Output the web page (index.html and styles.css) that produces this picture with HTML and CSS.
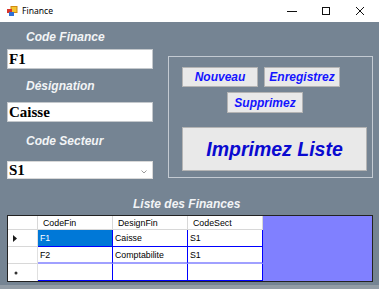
FILE: index.html
```html
<!DOCTYPE html>
<html>
<head>
<meta charset="utf-8">
<link rel="stylesheet" href="styles.css">
</head>
<body>
<div class="window">
  <div class="titlebar">
    <svg class="app-icon" width="11" height="10" viewBox="0 0 11 10">
      <rect x="4" y="0.5" width="6" height="6" fill="#f4c430" stroke="#d08a10" stroke-width="1"/>
      <rect x="0" y="3" width="5" height="4" fill="#d8362c"/>
      <rect x="2" y="6" width="5" height="4" fill="#2f6fd6"/>
    </svg>
    <span class="title">Finance</span>
    <div class="controls">
      <div class="ctl"><svg width="10" height="10" viewBox="0 0 10 10"><line x1="0" y1="5.5" x2="10" y2="5.5" stroke="#111" stroke-width="1"/></svg></div>
      <div class="ctl"><svg width="10" height="10" viewBox="0 0 10 10"><rect x="1.5" y="1.5" width="7" height="7" fill="none" stroke="#111" stroke-width="1"/></svg></div>
      <div class="ctl"><svg width="10" height="10" viewBox="0 0 10 10"><path d="M1 1 L9 9 M9 1 L1 9" stroke="#111" stroke-width="1"/></svg></div>
    </div>
  </div>
  <div class="client">
    <div class="top">
      <div class="fields">
        <div class="label l1">Code Finance</div>
        <div class="input f1">F1</div>
        <div class="label l2">Désignation</div>
        <div class="input f2">Caisse</div>
        <div class="label l3">Code Secteur</div>
        <div class="input combo">S1
          <svg class="chev" width="6" height="4" viewBox="0 0 6 4"><path d="M0.5 0.5 L3 3 L5.5 0.5" fill="none" stroke="#9a9a9a" stroke-width="1"/></svg>
        </div>
      </div>
      <div class="group">
        <div class="btn-row">
          <div class="btn">Nouveau</div>
          <div class="btn">Enregistrez</div>
        </div>
        <div class="btn btn-sup">Supprimez</div>
        <div class="btn btn-big">Imprimez Liste</div>
      </div>
    </div>
    <div class="list-title">Liste des Finances</div>
    <div class="grid">
      <div class="hc corner"></div>
      <div class="hc">CodeFin</div>
      <div class="hc">DesignFin</div>
      <div class="hc">CodeSect</div>
      <div class="empty"></div>

      <div class="rh"><svg width="5" height="7" viewBox="0 0 5 7"><path d="M0 0 L4 3.5 L0 7 Z" fill="#1a1a1a"/></svg></div>
      <div class="dc selected">F1</div>
      <div class="dc">Caisse</div>
      <div class="dc">S1</div>

      <div class="rh r2"></div>
      <div class="dc r2">F2</div>
      <div class="dc r2">Comptabilite</div>
      <div class="dc r2">S1</div>

      <div class="rh newrow"><svg width="4" height="4" viewBox="0 0 4 4"><circle cx="2" cy="2" r="1.5" fill="#333"/></svg></div>
      <div class="dc"></div>
      <div class="dc"></div>
      <div class="dc"></div>
    </div>
    <div class="bottom-edge"></div>
  </div>
</div>
</body>
</html>
```

FILE: styles.css
```css
* { box-sizing: border-box; }
html, body { margin: 0; padding: 0; }
body { width: 379px; height: 289px; overflow: hidden; background: #758493; }

.window { width: 379px; height: 289px; display: flex; flex-direction: column; }

.titlebar {
  height: 22px;
  background: #ffffff;
  display: flex;
  align-items: center;
  flex: none;
}
.app-icon { margin-left: 7px; flex: none; }
.title {
  margin-left: 4px;
  font-family: "Noto Sans", "Open Sans", sans-serif;
  font-size: 8.6px;
  color: #000;
}
.controls { margin-left: auto; margin-right: 2px; display: flex; height: 22px; }
.ctl { width: 34px; height: 22px; display: flex; align-items: center; justify-content: center; }

.client { flex: 1; background: #758493; display: flex; flex-direction: column; }

.top { display: flex; align-items: flex-start; }

.fields { width: 153px; padding-left: 7px; display: flex; flex-direction: column; }

.label {
  height: 16px;
  line-height: 16px;
  padding-left: 19px;
  font-family: "Liberation Sans", Arial, sans-serif;
  font-weight: bold;
  font-style: italic;
  font-size: 12px;
  color: #f2f4f6;
}
.l1 { margin-top: 7px; }
.l2 { margin-top: 9px; }
.l3 { margin-top: 11px; }

.input {
  position: relative;
  background: #fff;
  border: 1px solid #c4c8cc;
  height: 20px;
  display: flex;
  align-items: center;
  padding-left: 1px;
  font-family: "Liberation Serif", "Times New Roman", serif;
  font-weight: bold;
  font-size: 15px;
  color: #000;
}
.f1 { margin-top: 4px; }
.f2 { margin-top: 8px; }
.combo { margin-top: 12px; height: 18px; border-color: #d8d8d8; }
.chev { position: absolute; right: 5px; top: 8px; }

.group {
  margin-left: 15px;
  margin-top: 34px;
  width: 205px;
  height: 122px;
  border: 1px solid #c3cad2;
  padding-top: 10px;
  padding-left: 13px;
  display: flex;
  flex-direction: column;
  align-items: flex-start;
}
.btn-row { display: flex; gap: 6px; }
.btn {
  width: 76px;
  height: 20px;
  background: #e9e9e9;
  border: 1px solid #b4b4b4;
  display: flex;
  align-items: center;
  justify-content: center;
  font-family: "Liberation Sans", Arial, sans-serif;
  font-weight: bold;
  font-style: italic;
  font-size: 12px;
  color: #1414ff;
}
.btn-sup { margin-top: 5px; margin-left: 45px; height: 21px; }
.btn-big {
  margin-top: 14px;
  width: 185px;
  height: 44px;
  font-size: 19.5px;
  color: #0a0ad0;
}

.list-title {
  margin-top: 17px;
  margin-left: 133px;
  height: 16px;
  line-height: 16px;
  font-family: "Liberation Sans", Arial, sans-serif;
  font-weight: bold;
  font-style: italic;
  font-size: 12px;
  color: #f2f4f6;
}

.grid {
  margin-top: 3px;
  margin-left: 7px;
  width: 366px;
  height: 67px;
  border: 1px solid #222;
  display: grid;
  grid-template-columns: 30px 75px 75px 75px 1fr;
  grid-template-rows: 14px 17px 17px 17px;
  background: #fff;
  font-family: "Liberation Sans", Arial, sans-serif;
  font-size: 8.8px;
  color: #000;
}
.hc {
  background: #fff;
  border-right: 1px solid #d8d8d8;
  border-bottom: 1px solid #d8d8d8;
  display: flex;
  align-items: center;
  padding-left: 5px;
}
.empty { grid-column: 5; grid-row: 1 / 5; background: #8080ff; }
.rh {
  background: #fff;
  border-right: 1px solid #e0e0e0;
  border-bottom: 1px solid #d8d8d8;
  display: flex;
  align-items: center;
  padding-left: 5px;
}
.rh.newrow { padding-left: 6px; border-bottom: none; }
.dc {
  border-right: 1px solid #0000ff;
  border-bottom: 1px solid #0000ff;
  display: flex;
  align-items: center;
  padding-left: 2px;
  background: #fff;
}
.dc.r2 { border-bottom: 2px solid #a0a0ff; }
.selected { background: #0078d7; color: #fff; }

.bottom-edge { margin-top: 3px; height: 4px; background: #929ca6; }
```
